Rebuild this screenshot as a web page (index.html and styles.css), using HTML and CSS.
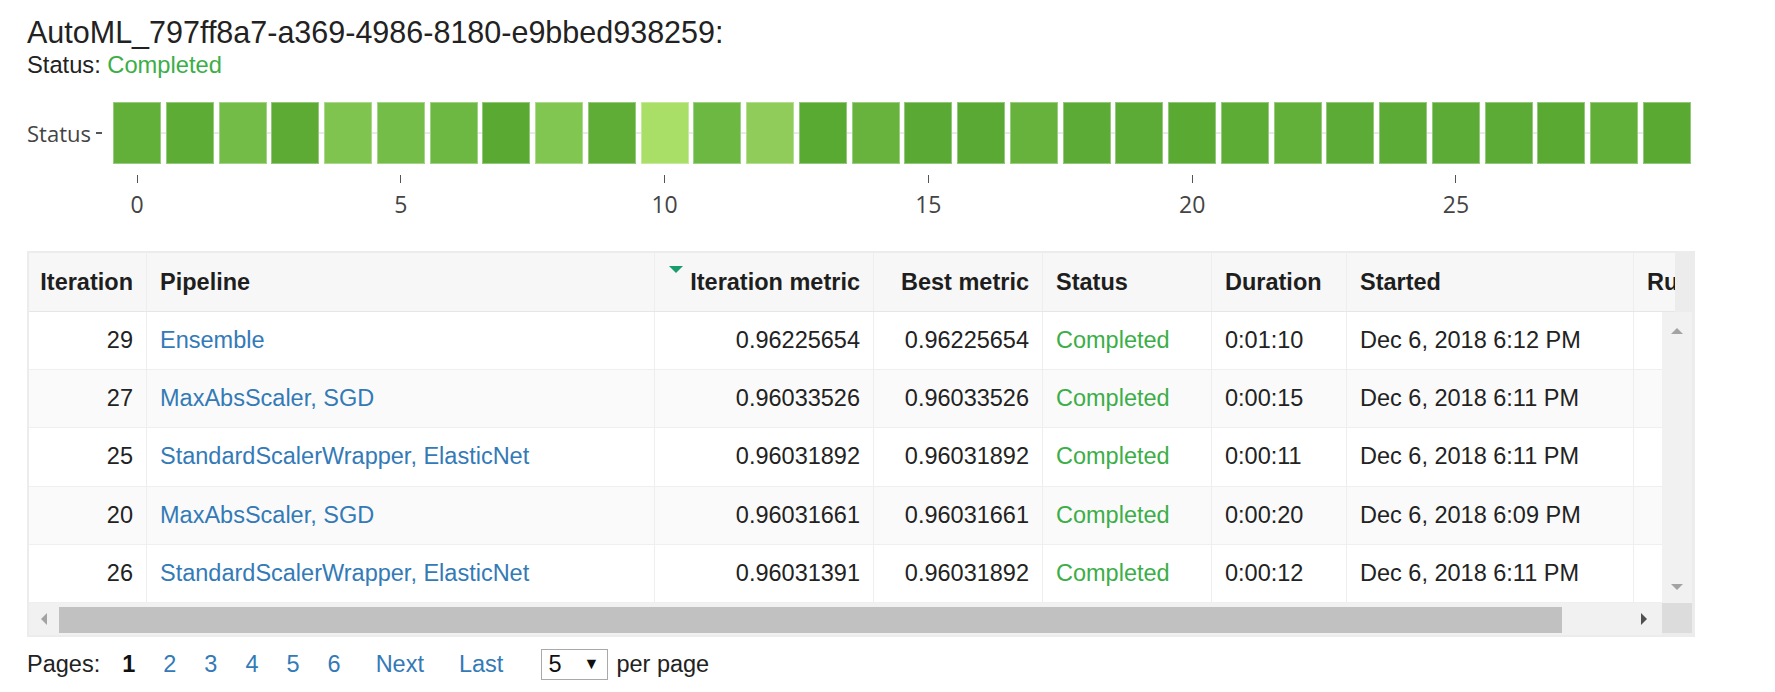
FILE: index.html
```html
<!DOCTYPE html>
<html>
<head>
<meta charset="utf-8">
<link rel="stylesheet" href="styles.css">
</head>
<body>
<div class="page">
  <div class="title">AutoML_797ff8a7-a369-4986-8180-e9bbed938259:</div>
  <div class="status-line">Status: <span class="ok">Completed</span></div>

  <div class="chart">
    <div class="chart-row">
      <div class="ylabel"><span>Status</span><i class="ytick"></i></div>
      <div class="bars">
        <div class="bar" style="background:#62af3a"></div>
        <div class="bar" style="background:#5dac36"></div>
        <div class="bar" style="background:#74bc48"></div>
        <div class="bar" style="background:#5daa35"></div>
        <div class="bar" style="background:#7fc44f"></div>
        <div class="bar" style="background:#75bd49"></div>
        <div class="bar" style="background:#6db843"></div>
        <div class="bar" style="background:#5aa933"></div>
        <div class="bar" style="background:#82c652"></div>
        <div class="bar" style="background:#5fad37"></div>
        <div class="bar" style="background:#a9de67"></div>
        <div class="bar" style="background:#6cb843"></div>
        <div class="bar" style="background:#8fcc59"></div>
        <div class="bar" style="background:#59aa33"></div>
        <div class="bar" style="background:#67b33d"></div>
        <div class="bar" style="background:#5aa934"></div>
        <div class="bar" style="background:#5aa934"></div>
        <div class="bar" style="background:#66b23c"></div>
        <div class="bar" style="background:#5cab36"></div>
        <div class="bar" style="background:#5cab36"></div>
        <div class="bar" style="background:#5aa933"></div>
        <div class="bar" style="background:#5dac36"></div>
        <div class="bar" style="background:#62af39"></div>
        <div class="bar" style="background:#5cab36"></div>
        <div class="bar" style="background:#5cab36"></div>
        <div class="bar" style="background:#5cab36"></div>
        <div class="bar" style="background:#5cab36"></div>
        <div class="bar" style="background:#5aa933"></div>
        <div class="bar" style="background:#61ae38"></div>
        <div class="bar" style="background:#5aa933"></div>
      </div>
    </div>
    <div class="axis-row">
      <div class="axis">
        <div class="tick t0"><span>0</span></div>
        <div class="tick t5"><span>5</span></div>
        <div class="tick t10"><span>10</span></div>
        <div class="tick t15"><span>15</span></div>
        <div class="tick t20"><span>20</span></div>
        <div class="tick t25"><span>25</span></div>
      </div>
    </div>
  </div>

  <div class="gridbox">
    <div class="ghead">
      <div class="row head">
        <div class="c r">Iteration</div>
        <div class="c">Pipeline</div>
        <div class="c r sorted">Iteration metric</div>
        <div class="c r">Best metric</div>
        <div class="c">Status</div>
        <div class="c">Duration</div>
        <div class="c">Started</div>
        <div class="c">Run ID</div>
      </div>
    </div>
    <div class="gmain">
      <div class="gbody">
        <div class="row">
          <div class="c r">29</div>
          <div class="c"><a class="lnk">Ensemble</a></div>
          <div class="c r">0.96225654</div>
          <div class="c r">0.96225654</div>
          <div class="c ok">Completed</div>
          <div class="c">0:01:10</div>
          <div class="c">Dec 6, 2018 6:12 PM</div>
          <div class="c"></div>
        </div>
        <div class="row alt">
          <div class="c r">27</div>
          <div class="c"><a class="lnk">MaxAbsScaler, SGD</a></div>
          <div class="c r">0.96033526</div>
          <div class="c r">0.96033526</div>
          <div class="c ok">Completed</div>
          <div class="c">0:00:15</div>
          <div class="c">Dec 6, 2018 6:11 PM</div>
          <div class="c"></div>
        </div>
        <div class="row">
          <div class="c r">25</div>
          <div class="c"><a class="lnk">StandardScalerWrapper, ElasticNet</a></div>
          <div class="c r">0.96031892</div>
          <div class="c r">0.96031892</div>
          <div class="c ok">Completed</div>
          <div class="c">0:00:11</div>
          <div class="c">Dec 6, 2018 6:11 PM</div>
          <div class="c"></div>
        </div>
        <div class="row alt">
          <div class="c r">20</div>
          <div class="c"><a class="lnk">MaxAbsScaler, SGD</a></div>
          <div class="c r">0.96031661</div>
          <div class="c r">0.96031661</div>
          <div class="c ok">Completed</div>
          <div class="c">0:00:20</div>
          <div class="c">Dec 6, 2018 6:09 PM</div>
          <div class="c"></div>
        </div>
        <div class="row">
          <div class="c r">26</div>
          <div class="c"><a class="lnk">StandardScalerWrapper, ElasticNet</a></div>
          <div class="c r">0.96031391</div>
          <div class="c r">0.96031892</div>
          <div class="c ok">Completed</div>
          <div class="c">0:00:12</div>
          <div class="c">Dec 6, 2018 6:11 PM</div>
          <div class="c"></div>
        </div>
      </div>
      <div class="vscroll">
        <i class="arr up"></i>
        <i class="arr down"></i>
      </div>
    </div>
    <div class="gfoot">
      <div class="hscroll">
        <span class="hbtn"><i class="arr left"></i></span>
        <div class="thumb"></div>
        <span class="hbtn end"><i class="arr right"></i></span>
      </div>
      <div class="corner"></div>
    </div>
  </div>

  <div class="pager">
    <span class="plabel">Pages:</span>
    <span class="pg cur">1</span>
    <a class="pg lnk">2</a>
    <a class="pg lnk">3</a>
    <a class="pg lnk">4</a>
    <a class="pg lnk">5</a>
    <a class="pg lnk">6</a>
    <a class="pg nav lnk">Next</a>
    <a class="pg nav lnk">Last</a>
    <span class="sel"><span>5</span><span class="caret">&#9660;</span></span>
    <span class="perpage">per page</span>
  </div>
</div>
</body>
</html>
```

FILE: styles.css
```css
body {
  margin: 0;
  background: #fff;
  color: #222;
  font-family: "Liberation Sans", Arial, sans-serif;
}

.page {
  padding: 15px 0 0 27px;
}

.title {
  font-size: 30.5px;
  line-height: 34px;
}

.status-line {
  font-size: 23.7px;
  line-height: 28px;
  margin-top: 2px;
}

.ok {
  color: #3cae48;
}

/* chart */
.chart {
  padding-top: 23px;
  font-family: "Open Sans", "DejaVu Sans", sans-serif;
  color: #444;
}

.chart-row {
  display: flex;
  height: 62px;
}

.ylabel {
  width: 86px;
  display: flex;
  align-items: center;
  justify-content: flex-end;
  font-size: 22px;
}

.ytick {
  display: block;
  width: 7px;
  height: 2px;
  background: #555;
  margin: 0 11px 0 5px;
}

.bars {
  width: 1578px;
  display: grid;
  grid-template-columns: repeat(30, 1fr);
  column-gap: 4.6px;
  background: linear-gradient(to bottom, transparent calc(50% - 1px), #e9e9e9 calc(50% - 1px), #e9e9e9 calc(50% + 1px), transparent calc(50% + 1px));
}

.bar {
  box-shadow: inset 0 0 0 1px rgba(255, 255, 255, 0.35);
}

.axis-row {
  display: flex;
  padding-left: 86px;
}

.axis {
  width: 1578px;
  display: grid;
  grid-template-columns: repeat(30, 1fr);
  column-gap: 4.6px;
}

.tick {
  display: flex;
  flex-direction: column;
  align-items: center;
  justify-self: center;
  width: 44px;
  grid-row: 1;
}

.tick::before {
  content: "";
  display: block;
  width: 1px;
  height: 8px;
  margin-top: 11px;
  background: #555;
}

.tick span {
  font-size: 23px;
  line-height: 18px;
  margin-top: 11.5px;
}

.t0 { grid-column: 1; }
.t5 { grid-column: 6; }
.t10 { grid-column: 11; }
.t15 { grid-column: 16; }
.t20 { grid-column: 21; }
.t25 { grid-column: 26; }

/* grid box */
.gridbox {
  margin-top: 38.5px;
  width: 1668px;
  box-sizing: border-box;
  padding: 2px 3px 2px 2px;
  background: #ececec;
  font-size: 23.5px;
}

.ghead {
  width: 1646px;
  overflow: hidden;
  background: #f7f7f7;
}

.row {
  display: grid;
  grid-template-columns: 118px 508px 219px 169px 169px 135px 287px 200px;
  width: 1805px;
  height: 58.2px;
  box-sizing: border-box;
  border-bottom: 1px solid #efefef;
  background: #fff;
}

.row.alt {
  background: #fafafa;
}

.row.head {
  height: 59px;
  background: #f7f7f7;
  border-bottom: 1px solid #e6e6e6;
  font-weight: bold;
  color: #1e1e1e;
}

.c {
  display: flex;
  align-items: center;
  padding: 0 13px;
  border-right: 1px solid #eeeeee;
  white-space: nowrap;
  overflow: hidden;
  position: relative;
}

.c.r {
  justify-content: flex-end;
}

.sorted::before {
  content: "";
  position: absolute;
  left: 14px;
  top: 13px;
  border-left: 7px solid transparent;
  border-right: 7px solid transparent;
  border-top: 7px solid #1a9c6c;
}

.lnk {
  color: #337ab7;
  text-decoration: none;
}

.gmain {
  display: flex;
}

.gbody {
  width: 1633px;
  overflow: hidden;
}

.vscroll {
  width: 30px;
  background: #f1f1f1;
  display: flex;
  flex-direction: column;
  align-items: center;
  justify-content: space-between;
  padding: 16px 0 13px;
  box-sizing: border-box;
}

.arr {
  display: block;
  width: 0;
  height: 0;
}

.arr.up {
  border-left: 6px solid transparent;
  border-right: 6px solid transparent;
  border-bottom: 6px solid #a3a3a3;
}

.arr.down {
  border-left: 6px solid transparent;
  border-right: 6px solid transparent;
  border-top: 6px solid #a3a3a3;
}

.arr.left {
  border-top: 6px solid transparent;
  border-bottom: 6px solid transparent;
  border-right: 6px solid #a3a3a3;
}

.arr.right {
  border-top: 6px solid transparent;
  border-bottom: 6px solid transparent;
  border-left: 6px solid #505050;
}

.gfoot {
  display: flex;
  height: 32px;
}

.hscroll {
  width: 1633px;
  background: #f1f1f1;
  display: flex;
  align-items: flex-start;
}

.hbtn {
  width: 30px;
  height: 32px;
  display: flex;
  align-items: center;
  justify-content: center;
}

.hbtn.end {
  margin-left: auto;
  width: 36px;
}

.thumb {
  width: 1503px;
  height: 26px;
  margin-top: 4px;
  background: #c1c1c1;
}

.corner {
  width: 30px;
  height: 30px;
  background: #dcdcdc;
}

/* pager */
.pager {
  display: flex;
  align-items: center;
  height: 31px;
  margin-top: 12px;
  font-size: 23.5px;
}

.plabel {
  color: #222;
}

.pg {
  margin-left: 28px;
}

.pg.cur {
  margin-left: 22px;
  font-weight: bold;
  color: #111;
}

.pg.nav {
  margin-left: 35px;
}

.sel {
  margin-left: 38px;
  width: 67px;
  height: 31px;
  box-sizing: border-box;
  border: 1px solid #a9a9a9;
  display: flex;
  align-items: center;
  padding-left: 6px;
  color: #111;
}

.caret {
  font-size: 16px;
  margin-left: 22px;
  color: #111;
}

.perpage {
  margin-left: 8px;
  color: #222;
}
```
